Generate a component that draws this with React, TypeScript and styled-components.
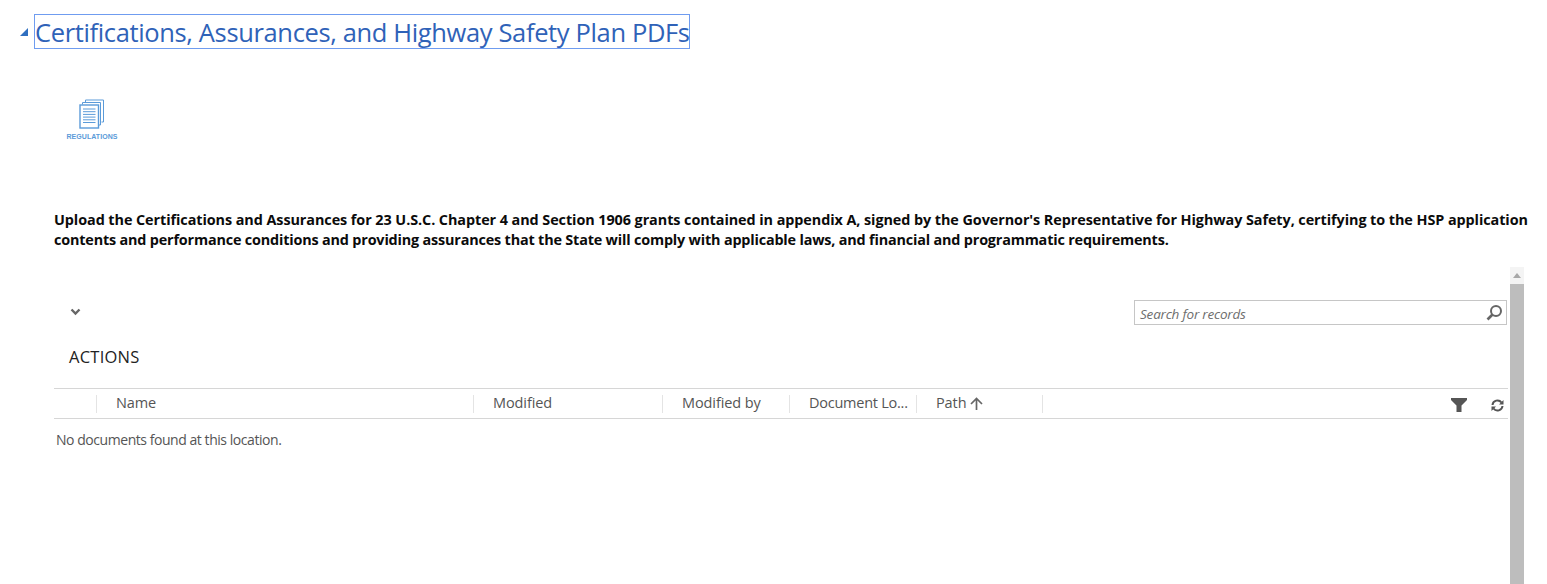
import { createGlobalStyle, styled } from 'styled-components';

const GlobalStyle = createGlobalStyle`
  html, body {
    margin: 0;
    padding: 0;
    background: #fff;
    overflow: hidden;
  }
  body {
    font-family: "Open Sans", "Noto Sans", sans-serif;
  }
`;

const Page = styled.div`
  width: 1547px;
  height: 584px;
  overflow: hidden;
  display: flex;
  flex-direction: column;
  padding-top: 14px;
  box-sizing: border-box;
`;

const SectionHeader = styled.div`
  display: flex;
  align-items: center;
  padding-left: 20px;
  gap: 6px;
`;

const Collapse = styled.svg`
  width: 8px;
  height: 8px;
  flex: none;
`;

const SectionTitle = styled.h2`
  margin: 0;
  width: 656px;
  height: 35px;
  box-sizing: border-box;
  border: 1px solid #6f9cf0;
  font-size: 25.5px;
  line-height: 35px;
  font-weight: 400;
  letter-spacing: -0.36px;
  color: #2f62b8;
  white-space: nowrap;
`;

const LogoLink = styled.div`
  margin: 50px 0 0 66px;
  width: 52px;
  display: flex;
  flex-direction: column;
  align-items: center;
  height: 43px;
`;

const LogoLabel = styled.span`
  font-family: "Liberation Sans", sans-serif;
  font-size: 7px;
  line-height: 9px;
  margin-top: 3px;
  font-weight: 700;
  letter-spacing: 0.05px;
  color: #5b9bd9;
`;

const Instructions = styled.div`
  margin: 68px 0 0 54px;
  width: 1490px;
  font-size: 14.4px;
  line-height: 20px;
  font-weight: 700;
  color: #0b0b0b;
`;

const InstructionLine = styled.div<{ $tracking: number }>`
  letter-spacing: ${(props) => props.$tracking}px;
  white-space: nowrap;
`;

const GridFrame = styled.div`
  margin: 17px 0 0 54px;
  width: 1470px;
  flex: 1;
  display: flex;
  min-height: 0;
`;

const GridMain = styled.div`
  flex: 1;
  min-width: 0;
  display: flex;
  flex-direction: column;
  padding-top: 33px;
`;

const Toolbar = styled.div`
  display: flex;
  justify-content: space-between;
  align-items: flex-start;
  height: 25px;
  padding: 0 1px 0 16px;
`;

const Chevron = styled.svg`
  width: 11px;
  height: 8px;
  margin-top: 8px;
`;

const SearchBox = styled.div`
  width: 373px;
  height: 25px;
  box-sizing: border-box;
  border: 1px solid #c6c6c6;
  display: flex;
  align-items: center;
  justify-content: space-between;
  padding: 0 3px 0 5px;
`;

const SearchText = styled.span`
  font-size: 13.5px;
  font-style: italic;
  letter-spacing: -0.2px;
  color: #6e6e6e;
  padding-top: 2px;
`;

const ActionsTitle = styled.div`
  margin: 21px 0 0 15px;
  height: 42px;
  font-size: 16.5px;
  line-height: 22px;
  letter-spacing: 0.25px;
  color: #222;
`;

const HeaderRow = styled.div`
  display: flex;
  align-items: center;
  height: 31px;
  box-sizing: border-box;
  border-top: 1px solid #d6d6d6;
  border-bottom: 1px solid #d6d6d6;
`;

const HeaderCell = styled.div<{ $width: number }>`
  width: ${(props) => props.$width}px;
  height: 18px;
  box-sizing: border-box;
  flex: none;
  border-right: 1px solid #e4e4e4;
  padding: 0 0 2px 19px;
  display: flex;
  align-items: center;
  gap: 4px;
  font-size: 14.5px;
  letter-spacing: -0.1px;
  color: #555;
  white-space: nowrap;
`;

const DocumentLabel = styled.span`
  letter-spacing: -0.25px;
`;

const SortArrow = styled.svg`
  margin-top: 2px;
`;

const HeaderTools = styled.div`
  margin-left: auto;
  display: flex;
  align-items: center;
  gap: 24px;
  padding: 3px 4px 0 0;
`;

const EmptyMessage = styled.div`
  margin: 11px 0 0 2px;
  font-size: 14px;
  line-height: 20px;
  letter-spacing: -0.45px;
  color: #555;
`;

const ScrollTrack = styled.div`
  width: 14px;
  flex: none;
  margin-left: 2px;
  display: flex;
  flex-direction: column;
  background: #f4f4f4;
`;

const ScrollButton = styled.div`
  height: 17px;
  display: flex;
  align-items: center;
  justify-content: center;
`;

const ScrollThumb = styled.div`
  flex: 1;
  background: #bdbdbd;
`;

const columns = [
  { label: '', width: 43 },
  { label: 'Name', width: 377 },
  { label: 'Modified', width: 189 },
  { label: 'Modified by', width: 127 },
];

function RegulationsIcon() {
  return (
    <svg width="26" height="30" viewBox="0 0 26 30" fill="none" stroke="#5b9bd9">
      <path d="M6.5 3V1H24.5V23H22.5" strokeWidth="1" />
      <path d="M3.5 5.5V3.5H21.5V26H19.5" fill="#fff" strokeWidth="1" />
      <rect x="1" y="6" width="18.5" height="23" fill="#fff" strokeWidth="1.4" />
      <path d="M4 10H16.5M4 12.7H16.5M4 15.4H16.5M4 18.1H16.5M4 20.8H16.5M4 23.5H16.5" strokeWidth="1" />
    </svg>
  );
}

function App() {
  return (
    <Page>
      <GlobalStyle />
      <SectionHeader>
        <Collapse viewBox="0 0 8 8">
          <path d="M8 0V8H0Z" fill="#2f6fc0" />
        </Collapse>
        <SectionTitle>Certifications, Assurances, and Highway Safety Plan PDFs</SectionTitle>
      </SectionHeader>
      <LogoLink>
        <RegulationsIcon />
        <LogoLabel>REGULATIONS</LogoLabel>
      </LogoLink>
      <Instructions>
        <InstructionLine $tracking={-0.07}>
          Upload the Certifications and Assurances for 23 U.S.C. Chapter 4 and Section 1906 grants contained in appendix A, signed by the Governor's Representative for Highway Safety, certifying to the HSP application
        </InstructionLine>
        <InstructionLine $tracking={-0.175}>
          contents and performance conditions and providing assurances that the State will comply with applicable laws, and financial and programmatic requirements.
        </InstructionLine>
      </Instructions>
      <GridFrame>
        <GridMain>
          <Toolbar>
            <Chevron viewBox="0 0 11 8">
              <path d="M1.5 1.5L5.5 5.5L9.5 1.5" fill="none" stroke="#666" strokeWidth="2.4" />
            </Chevron>
            <SearchBox>
              <SearchText>Search for records</SearchText>
              <svg width="17" height="17" viewBox="0 0 17 17" fill="none" stroke="#666">
                <circle cx="10" cy="7" r="5" strokeWidth="2" />
                <path d="M6.5 10.5L1.5 15.5" strokeWidth="2.6" />
              </svg>
            </SearchBox>
          </Toolbar>
          <ActionsTitle>ACTIONS</ActionsTitle>
          <HeaderRow>
            {columns.map((column) => (
              <HeaderCell key={column.label} $width={column.width}>
                {column.label}
              </HeaderCell>
            ))}
            <HeaderCell $width={127}>
              <DocumentLabel>Document Lo...</DocumentLabel>
            </HeaderCell>
            <HeaderCell $width={126}>
              Path
              <SortArrow width="13" height="13" viewBox="0 0 13 13" fill="none" stroke="#666" strokeWidth="1.7">
                <path d="M6.5 13V1.5M1 7L6.5 1.5L12 7" />
              </SortArrow>
            </HeaderCell>
            <HeaderTools>
              <svg width="16" height="14" viewBox="0 0 16 14">
                <path d="M0 0H16V2L10.5 7.5V14H5.5V7.5L0 2Z" fill="#555" />
              </svg>
              <svg width="13" height="13" viewBox="0 0 13 13" fill="none" stroke="#555" strokeWidth="2">
                <path d="M1.5 6A5 5 0 0 1 10.5 3.5" />
                <path d="M11.5 7A5 5 0 0 1 2.5 9.5" />
                <path d="M12.5 1V5.5H8ZM.5 12V7.5H5Z" fill="#555" strokeWidth="0" />
              </svg>
            </HeaderTools>
          </HeaderRow>
          <EmptyMessage>No documents found at this location.</EmptyMessage>
        </GridMain>
        <ScrollTrack>
          <ScrollButton>
            <svg width="8" height="5" viewBox="0 0 8 5">
              <path d="M4 0L8 5H0Z" fill="#a8a8a8" />
            </svg>
          </ScrollButton>
          <ScrollThumb />
        </ScrollTrack>
      </GridFrame>
    </Page>
  );
}

export default App;
